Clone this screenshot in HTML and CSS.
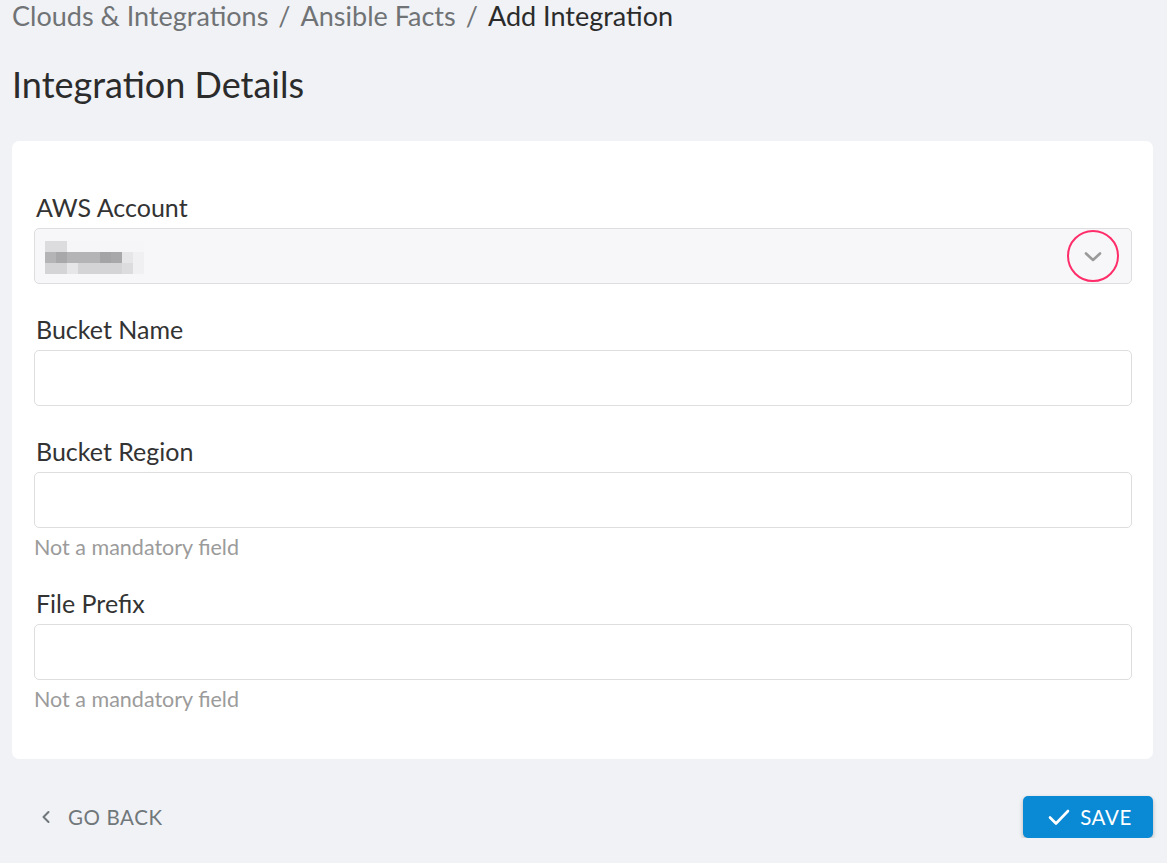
FILE: index.html
```html
<!DOCTYPE html>
<html lang="en">
<head>
<meta charset="utf-8">
<title>Add Integration</title>
<link rel="stylesheet" href="styles.css">
</head>
<body>
<nav class="crumbs">
  <span class="crumb">Clouds &amp; Integrations</span>
  <span class="sep">/</span>
  <span class="crumb">Ansible Facts</span>
  <span class="sep">/</span>
  <span class="crumb current">Add Integration</span>
</nav>
<h1 class="title">Integration Details</h1>
<section class="card">
  <div class="field">
    <label class="label">AWS Account</label>
    <div class="select">
      <div class="blur">
        <span class="px a1"></span><span class="px a1"></span><span class="px a0"></span><span class="px a0"></span><span class="px a0"></span><span class="px a0"></span><span class="px a0"></span><span class="px a0"></span><span class="px a0"></span>
        <span class="px b1"></span><span class="px b2"></span><span class="px b1"></span><span class="px b1"></span><span class="px b1"></span><span class="px b3"></span><span class="px b2"></span><span class="px c1"></span><span class="px a2"></span>
        <span class="px c2"></span><span class="px c2"></span><span class="px c1"></span><span class="px c2"></span><span class="px c2"></span><span class="px c2"></span><span class="px c2"></span><span class="px a1"></span><span class="px a2"></span>
      </div>
      <div class="chev-ring">
        <svg width="18" height="12" viewBox="0 0 18 12"><path d="M2 2.5 L9 9 L16 2.5" fill="none" stroke="#9a9a9a" stroke-width="2.6" stroke-linecap="round" stroke-linejoin="round"/></svg>
      </div>
    </div>
  </div>
  <div class="field">
    <label class="label">Bucket Name</label>
    <div class="input"></div>
  </div>
  <div class="field">
    <label class="label">Bucket Region</label>
    <div class="input"></div>
    <div class="help">Not a mandatory field</div>
  </div>
  <div class="field">
    <label class="label">File Prefix</label>
    <div class="input"></div>
    <div class="help">Not a mandatory field</div>
  </div>
</section>
<footer class="actions">
  <button class="back">
    <svg width="10" height="14" viewBox="0 0 10 14"><path d="M7.5 2 L2.5 7 L7.5 12" fill="none" stroke="#70777a" stroke-width="2" stroke-linecap="round" stroke-linejoin="round"/></svg>
    <span>GO BACK</span>
  </button>
  <button class="save">
    <svg width="22" height="18" viewBox="0 0 22 18"><path d="M2 9.5 L8 15.5 L20 3" fill="none" stroke="#ffffff" stroke-width="2.6" stroke-linecap="round" stroke-linejoin="round"/></svg>
    <span>SAVE</span>
  </button>
</footer>
</body>
</html>
```
FILE: styles.css
```css
* { box-sizing: border-box; }
html, body { margin: 0; padding: 0; }
body {
  background: #f0f2f6;
  font-family: Lato, "Open Sans", Arial, sans-serif;
  padding: 0 14px 0 12px;
  color: #2d2d2d;
}
.crumbs {
  font-size: 27px;
  line-height: 32px;
  height: 32px;
  display: flex;
  gap: 10px;
  color: #707375;
}
.crumb.current { color: #2b2b2b; }
.sep { color: #707375; }
.title {
  margin: 31px 0 0 0;
  font-size: 36px;
  line-height: 42px;
  font-weight: 400;
  color: #2b2b2b;
}
.card {
  margin-top: 36px;
  background: #fff;
  border-radius: 7px;
  padding: 52px 21px 49px 22px;
  display: flex;
  flex-direction: column;
  gap: 31px;
}
.field { display: flex; flex-direction: column; }
.label {
  font-size: 25px;
  line-height: 28px;
  color: #333;
  padding-left: 2px;
  margin-bottom: 7px;
}
.select, .input {
  height: 56px;
  border: 1px solid #dedede;
  border-radius: 5px;
  background: #fff;
}
.select {
  background: #f7f7f9;
  display: flex;
  align-items: center;
  justify-content: space-between;
  padding: 0 10px 0 10px;
}
.blur {
  display: grid;
  grid-template-columns: repeat(9, 11px);
  grid-template-rows: repeat(3, 11px);
  margin-top: 2px;
}
.px { display: block; }
.a0 { background: #f6f6f8; }
.a2 { background: #f0f0f2; }
.a1 { background: #dcdcde; }
.b1 { background: #b4b4b6; }
.b2 { background: #a8a8aa; }
.b3 { background: #a4a4a6; }
.c1 { background: #e6e6e8; }
.c2 { background: #d4d4d6; }
.chev-ring {
  width: 52px;
  height: 52px;
  border: 2px solid #ff2d6a;
  border-radius: 50%;
  display: flex;
  align-items: center;
  justify-content: center;
  margin: -1px 2px 0 0;
  padding-top: 2px;
}
.help {
  margin-top: 8px;
  font-size: 21.5px;
  line-height: 22px;
  color: #9b9b9b;
}
.actions {
  display: flex;
  justify-content: space-between;
  align-items: center;
  margin-top: 37px;
}
.back {
  background: none;
  border: none;
  font-family: inherit;
  font-size: 20.5px;
  letter-spacing: 0.6px;
  color: #70777a;
  display: flex;
  align-items: center;
  gap: 17px;
  padding: 0 0 0 29px;
  cursor: pointer;
}
.save {
  width: 130px;
  height: 42px;
  background: #0a89d4;
  border: none;
  border-radius: 5px;
  color: #fff;
  font-family: inherit;
  font-size: 20.5px;
  letter-spacing: 0.6px;
  display: flex;
  align-items: center;
  justify-content: center;
  gap: 10px;
  box-shadow: 0 2px 4px rgba(0,0,0,0.25);
  padding: 0 0 0 4px;
}
```
